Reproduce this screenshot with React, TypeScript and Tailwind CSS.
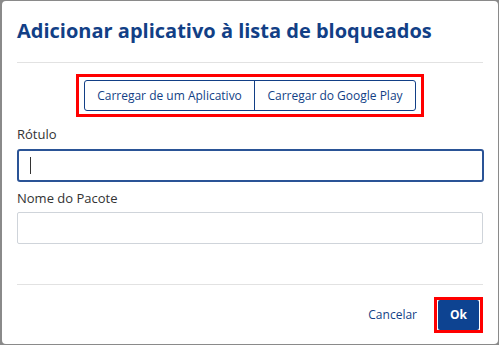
import React from 'react';

const App: React.FC = () => {
  return (
    <div className="w-[499px] h-[345px] bg-[#8a8a8a] overflow-hidden pl-[2px] pt-[1px]" style={{ fontFamily: '"Open Sans", sans-serif' }}>
      <div className="w-[496px] h-[343px] bg-white rounded-[4px] flex flex-col">
        {/* header */}
        <div className="px-[15px] pt-[16px]">
          <h2 className="text-[20px] leading-[28px] font-bold text-[#123f86]">
            Adicionar aplicativo à lista de bloqueados
          </h2>
          <div className="mt-[17px] h-px bg-[#e2e2e2] w-[466px]" />
        </div>

        {/* source buttons */}
        <div className="flex justify-center pt-[11px]">
          <div className="border-[3px] border-[#ff0000] px-[5px] py-[3px]">
            <div className="flex border border-[#123f86] rounded-[3px] h-[31px] text-[12px] text-[#123f86]">
              <button className="w-[170px] flex items-center justify-center border-r border-[#123f86]">
                Carregar de um Aplicativo
              </button>
              <button className="w-[160px] flex items-center justify-center">
                Carregar do Google Play
              </button>
            </div>
          </div>
        </div>

        {/* form */}
        <div className="px-[15px] pt-[6px]">
          <label className="block text-[13px] leading-[22px] text-[#333]">Rótulo</label>
          <div className="mt-[4px] w-[467px] h-[33px] border-2 border-[#2a5396] rounded-[3px] flex items-center pl-[11px]">
            <div className="w-px h-[17px] bg-[#333]" />
          </div>
          <label className="block mt-[5px] text-[13px] leading-[22px] text-[#333]">Nome do Pacote</label>
          <div className="mt-[3px] w-[466px] h-[32px] border border-[#cfd4da] rounded-[2px]" />
          <div className="mt-[40px] h-px bg-[#e2e2e2] w-[466px]" />
        </div>

        {/* footer */}
        <div className="flex items-center justify-end gap-[17px] pr-[15px] pt-[12px]">
          <button className="text-[12px] text-[#123f86]">Cancelar</button>
          <div className="border-[3px] border-[#ff0000] px-px">
            <button className="w-[41px] h-[30px] bg-[#0d4391] text-white text-[12px] font-bold rounded-[2px]">
              Ok
            </button>
          </div>
        </div>
      </div>
    </div>
  );
};

export default App;
